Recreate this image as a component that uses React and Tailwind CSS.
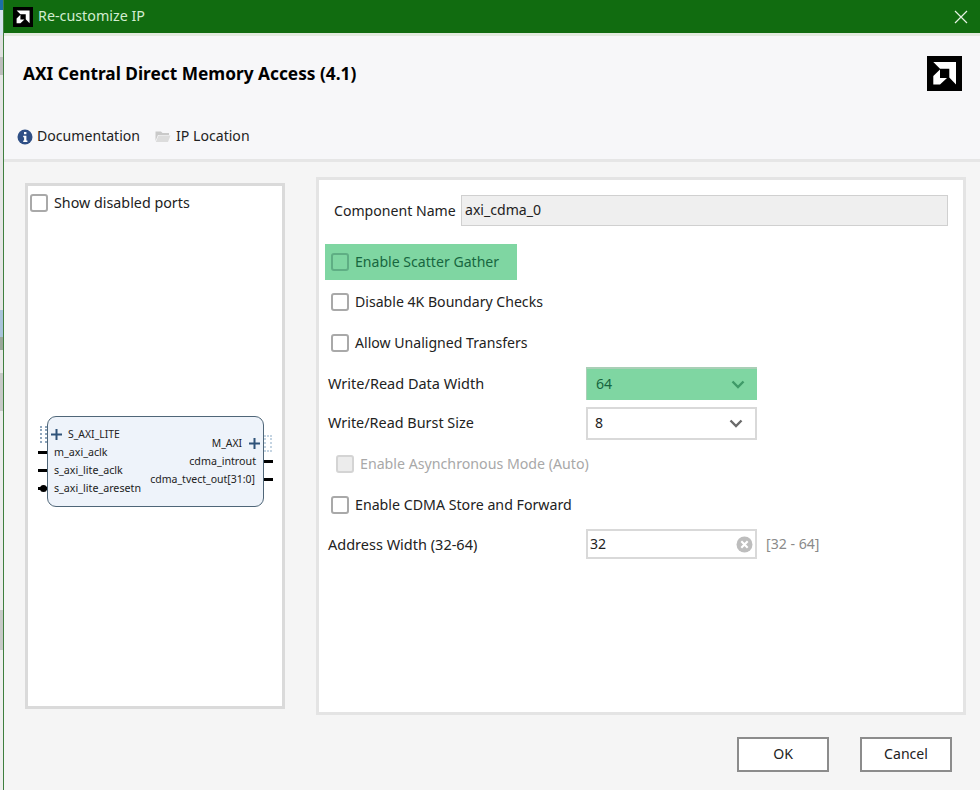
import React from 'react';

const AmdLogo = ({ className }) => (
  <svg className={className} viewBox="0 0 35 35">
    <rect width="35" height="35" fill="#000" />
    <path fill="#fff" d="M6.3 6H29V28.5L22.3 21.5V12.7H13Z" />
    <path fill="#fff" d="M6.3 20L13 13.5V22H20L13 28.5H6.3Z" />
  </svg>
);

const Chevron = ({ color }) => (
  <svg width="14" height="9" viewBox="0 0 14 9" fill="none">
    <path d="M1.5 1.5L7 7L12.5 1.5" stroke={color} strokeWidth="2.4" />
  </svg>
);

const Check = ({ green, disabled }) => (
  <div
    className={`w-[18px] h-[18px] shrink-0 rounded-[3px] border-2 ${
      green ? 'border-[#5fae84] bg-[#7fd6a2]' : disabled ? 'border-[#d4d4d4] bg-[#ececec]' : 'border-[#a9a9a9] bg-white'
    }`}
  />
);

const CheckRow = ({ label, className }) => (
  <div className={`flex items-center gap-[6px] h-9 pl-3 text-[#222] ${className}`}>
    <Check />
    <span>{label}</span>
  </div>
);

const Plus = ({ className }) => (
  <svg className={`absolute ${className}`} width="11" height="11" viewBox="0 0 11 11">
    <path d="M5.5 0V11M0 5.5H11" stroke="#2f5379" strokeWidth="2" />
  </svg>
);

const Pin = ({ className }) => <div className={`absolute w-[9px] h-[3px] bg-black ${className}`} />;

const Port = ({ className, children }) => (
  <span className={`absolute leading-none whitespace-nowrap text-[#222] ${className}`}>{children}</span>
);

// block symbol, coordinates are relative to the white area of the left panel
const Symbol = () => (
  <>
    <div className="absolute left-[19px] top-[230px] w-[217px] h-[91px] rounded-[9px] border border-[#4f6678] bg-[#eef3fa]" />
    <div className="absolute left-[12px] top-[240px] w-[7px] h-[17px] border-2 border-dotted border-[#8fa6bd]" />
    <div className="absolute left-[236px] top-[249px] w-[8px] h-[17px] border-2 border-dotted border-[#c4d4e2]" />
    <Plus className="left-[23px] top-[243px]" />
    <Plus className="left-[221px] top-[252px]" />
    <Port className="left-[40px] top-[243px] text-[10.4px]">S_AXI_LITE</Port>
    <Port className="left-[26px] top-[261px] text-[10.7px]">m_axi_aclk</Port>
    <Port className="left-[26px] top-[279px] text-[10.7px]">s_axi_lite_aclk</Port>
    <Port className="left-[26px] top-[297px] text-[10.7px]">s_axi_lite_aresetn</Port>
    <Port className="right-[40px] top-[252px] text-[10.4px]">M_AXI</Port>
    <Port className="right-[26px] top-[270px] text-[10.7px]">cdma_introut</Port>
    <Port className="right-[27px] top-[288px] text-[10.5px]">cdma_tvect_out[31:0]</Port>
    <Pin className="left-[10px] top-[265px]" />
    <Pin className="left-[10px] top-[283px]" />
    <Pin className="left-[10px] top-[301px]" />
    <div className="absolute left-[12px] top-[299px] w-[7px] h-[7px] rounded-full border-2 border-black bg-black" />
    <Pin className="left-[236px] top-[274px]" />
    <Pin className="left-[236px] top-[292px]" />
  </>
);

export default function App() {
  return (
    <div
      className="flex w-[980px] h-[790px] overflow-hidden bg-[#f5f5f5] text-[14.1px] leading-none"
      style={{ fontFamily: '"Noto Sans", sans-serif' }}
    >
      {/* window behind the dialog */}
      <div className="flex flex-col w-[3px] shrink-0 bg-[#efefef]">
        <div className="h-[10px] bg-[#1b6fa8]" />
        <div className="h-[25px] bg-[#d5e3ee]" />
        <div className="h-[22px] bg-[#e0e0e0]" />
        <div className="h-[18px] bg-[#bdbdbd]" />
        <div className="h-[235px] bg-[#e6e6e6]" />
        <div className="h-[27px] bg-[#a9c3da]" />
        <div className="h-[13px] bg-[#9aa79a]" />
        <div className="h-[23px] bg-[#e8e8e8]" />
        <div className="h-[38px] bg-[#c7c9c7]" />
        <div className="h-[199px] bg-[#ececec]" />
        <div className="h-[40px] bg-[#c7c9c7]" />
      </div>

      <div className="flex flex-col flex-1 min-w-0 border-l border-[#3f7f3f]">
        <div className="flex items-center justify-between h-[33px] shrink-0 pl-[9px] pr-[12px] bg-[#116c10]">
          <div className="flex items-center gap-[5px]">
            <AmdLogo className="w-5 h-5" />
            <span className="text-[#d3ecd0] text-[14.3px]">Re-customize IP</span>
          </div>
          <svg width="14" height="14" viewBox="0 0 14 14">
            <path d="M1 1L13 13M13 1L1 13" stroke="#e6f2e4" strokeWidth="1.2" />
          </svg>
        </div>
        <div className="h-[3px] shrink-0 bg-[#e3eadf]" />

        <div className="flex items-center justify-between h-[70px] shrink-0 pl-[19px] pr-[18px] pt-[4px] bg-[#f7f7f9]">
          <h1 className="mt-[2px] text-[17.3px] font-bold text-black">AXI Central Direct Memory Access (4.1)</h1>
          <AmdLogo className="w-[35px] h-[35px]" />
        </div>

        <div className="flex items-center h-[53px] shrink-0 pl-[13px] pt-[8px] bg-[#f7f7f9] text-[#222]">
          <svg width="16" height="16" viewBox="0 0 16 16">
            <circle cx="8" cy="8" r="7.5" fill="#2f4f86" />
            <rect x="7" y="3" width="2.4" height="2.2" fill="#fff" />
            <path d="M6.2 6.8H9.4V11.6H10.4V13H6.2V11.6H7.1V8.2H6.2Z" fill="#fff" />
          </svg>
          <span className="ml-[4px]">Documentation</span>
          <svg className="ml-[15px] -mt-[2px]" width="16" height="14" viewBox="0 0 16 14">
            <path d="M0.5 2.5H6L7.5 4H14V6H3L0.5 12Z" fill="#c9c9c9" />
            <path d="M3.5 6.5H15.5L13 13H0.8Z" fill="#dcdcdc" />
          </svg>
          <span className="ml-[5px]">IP Location</span>
        </div>
        <div className="h-[3px] shrink-0 bg-[#e6e6e6]" />

        <div className="flex flex-1 min-h-0 pl-[21px] pr-[13px] pt-[15px]">
          {/* symbol panel */}
          <div className="relative w-[260px] h-[526px] mt-[6px] shrink-0 border-[3px] border-[#dadada] bg-white">
            <div className="flex items-center gap-[6px] pl-[2px] pt-[8px] text-[14.3px] text-[#222]">
              <Check />
              <span>Show disabled ports</span>
            </div>
            <Symbol />
          </div>

          {/* settings panel */}
          <div className="flex flex-col w-[650px] h-[538px] ml-[31px] border-[3px] border-[#e4e4e4] bg-white">
            <div className="flex items-center h-[31px] mt-[15px] pl-[15px] text-[#222]">
              <span className="w-[127px] pt-[1px]">Component Name</span>
              <div className="flex items-center w-[487px] h-[31px] pl-[3px] border border-[#d0d0d0] bg-[#efefef]">axi_cdma_0</div>
            </div>

            <div className="flex items-center gap-[6px] w-[192px] h-9 mt-[18px] ml-[6px] pl-[6px] bg-[#7fd6a2] text-[#17663f]">
              <Check green />
              <span>Enable Scatter Gather</span>
            </div>
            <CheckRow label="Disable 4K Boundary Checks" className="mt-[4px]" />
            <CheckRow label="Allow Unaligned Transfers" className="mt-[5px]" />

            <div className="flex items-center h-[33px] mt-[6px] pl-[9px] text-[#222]">
              <span className="w-[258px] text-[14.5px]">Write/Read Data Width</span>
              <div className="flex items-center justify-between w-[171px] h-[33px] pl-[9px] pr-[12px] border-t-2 border-l border-[#a9cfb6] bg-[#7fd6a2] text-[#17663f]">
                64
                <Chevron color="#3f9a68" />
              </div>
            </div>
            <div className="flex items-center h-[33px] mt-[7px] pl-[9px] text-[#222]">
              <span className="w-[258px] text-[14.4px]">Write/Read Burst Size</span>
              <div className="flex items-center justify-between w-[171px] h-[33px] pl-[7px] pr-[12px] border-2 border-[#d9d9d9] bg-white">
                8
                <Chevron color="#6a6a6a" />
              </div>
            </div>

            <div className="flex items-center gap-[6px] h-9 mt-[6px] pl-[17px] text-[14.2px] text-[#a8a8a8]">
              <Check disabled />
              <span>Enable Asynchronous Mode (Auto)</span>
            </div>
            <CheckRow label="Enable CDMA Store and Forward" className="mt-[5px] text-[14.2px]" />

            <div className="flex items-center h-[30px] mt-[6px] pl-[9px] text-[#222]">
              <span className="w-[258px] text-[14.5px]">Address Width (32-64)</span>
              <div className="flex items-center justify-between w-[171px] h-[30px] pl-[2px] pr-[2px] border-2 border-[#d9d9d9] bg-white">
                32
                <svg width="17" height="17" viewBox="0 0 16 16">
                  <circle cx="8" cy="8" r="7.5" fill="#bdbdbd" />
                  <path d="M5 5L11 11M11 5L5 11" stroke="#fff" strokeWidth="2" />
                </svg>
              </div>
              <span className="ml-[9px] text-[#8a8a8a]">[32 - 64]</span>
            </div>
          </div>
        </div>

        <div className="flex justify-end gap-[31px] shrink-0 h-[75px] pt-[22px] pr-[28px]">
          <button className="w-[92px] h-[35px] border-2 border-[#8c8c8c] bg-white text-[#222]">OK</button>
          <button className="w-[92px] h-[35px] border-2 border-[#8c8c8c] bg-white text-[#222]">Cancel</button>
        </div>
      </div>
    </div>
  );
}
